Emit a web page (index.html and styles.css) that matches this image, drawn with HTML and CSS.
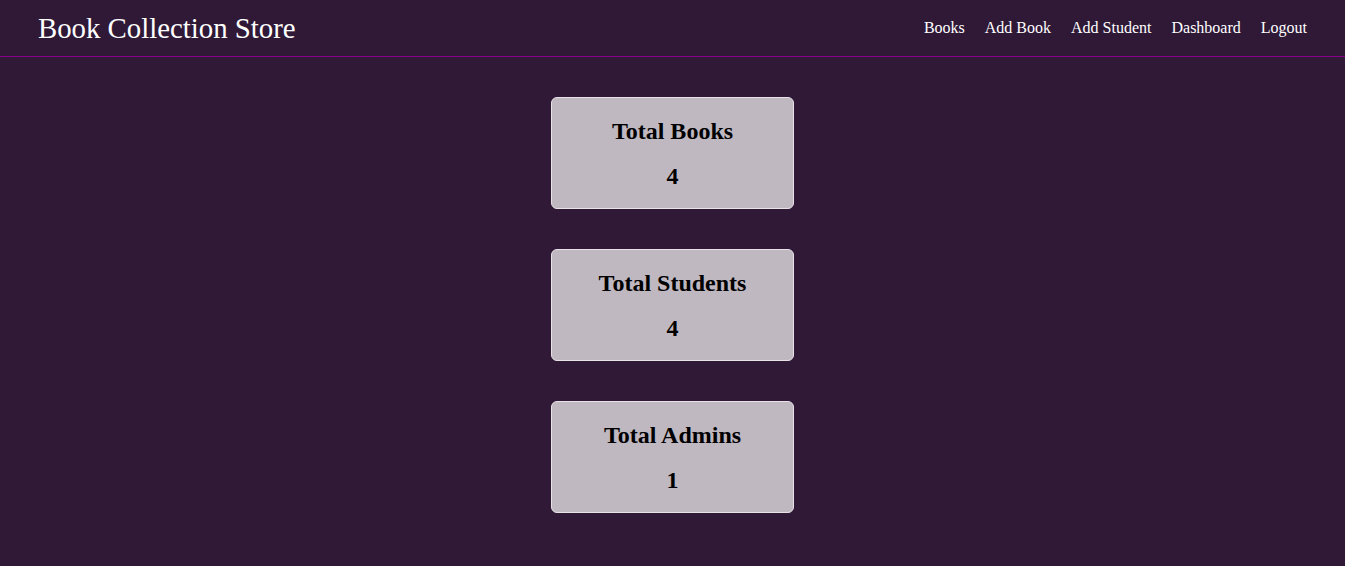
FILE: index.html
```html
<!DOCTYPE html>
<html>
<head>
<meta charset="utf-8">
<link rel="stylesheet" href="styles.css">
</head>
<body>
<nav class="navbar">
  <div class="brand">Book Collection Store</div>
  <div class="links">
    <a href="#">Books</a>
    <a href="#">Add Book</a>
    <a href="#">Add Student</a>
    <a href="#">Dashboard</a>
    <a href="#">Logout</a>
  </div>
</nav>
<main class="dashboard">
  <div class="card"><h2>Total Books</h2><h2>4</h2></div>
  <div class="card"><h2>Total Students</h2><h2>4</h2></div>
  <div class="card"><h2>Total Admins</h2><h2>1</h2></div>
</main>
</body>
</html>
```
FILE: styles.css
```css
html, body {
  margin: 0;
  padding: 0;
  background: #2f1937;
  font-family: "Liberation Serif", "Times New Roman", serif;
  min-height: 100%;
}
.navbar {
  height: 56px;
  border-bottom: 1px solid #8b008b;
  display: flex;
  align-items: center;
  justify-content: space-between;
  padding: 0 38px;
}
.brand {
  color: #fff;
  font-size: 28.8px;
}
.links {
  display: flex;
  gap: 20px;
}
.links a {
  color: #fff;
  text-decoration: none;
  font-size: 16px;
}
.dashboard {
  display: flex;
  flex-direction: column;
  align-items: center;
  gap: 40px;
  padding-top: 40px;
}
.card {
  width: 241px;
  height: 110px;
  box-sizing: content-box;
  background: #c0b8c1;
  border: 1px solid #e8e2e8;
  border-radius: 6px;
  text-align: center;
  display: flex;
  flex-direction: column;
  justify-content: center;
  gap: 17px;
}
.card h2 {
  margin: 0;
  font-size: 24px;
  font-weight: bold;
  color: #000;
  line-height: 28px;
}
```
